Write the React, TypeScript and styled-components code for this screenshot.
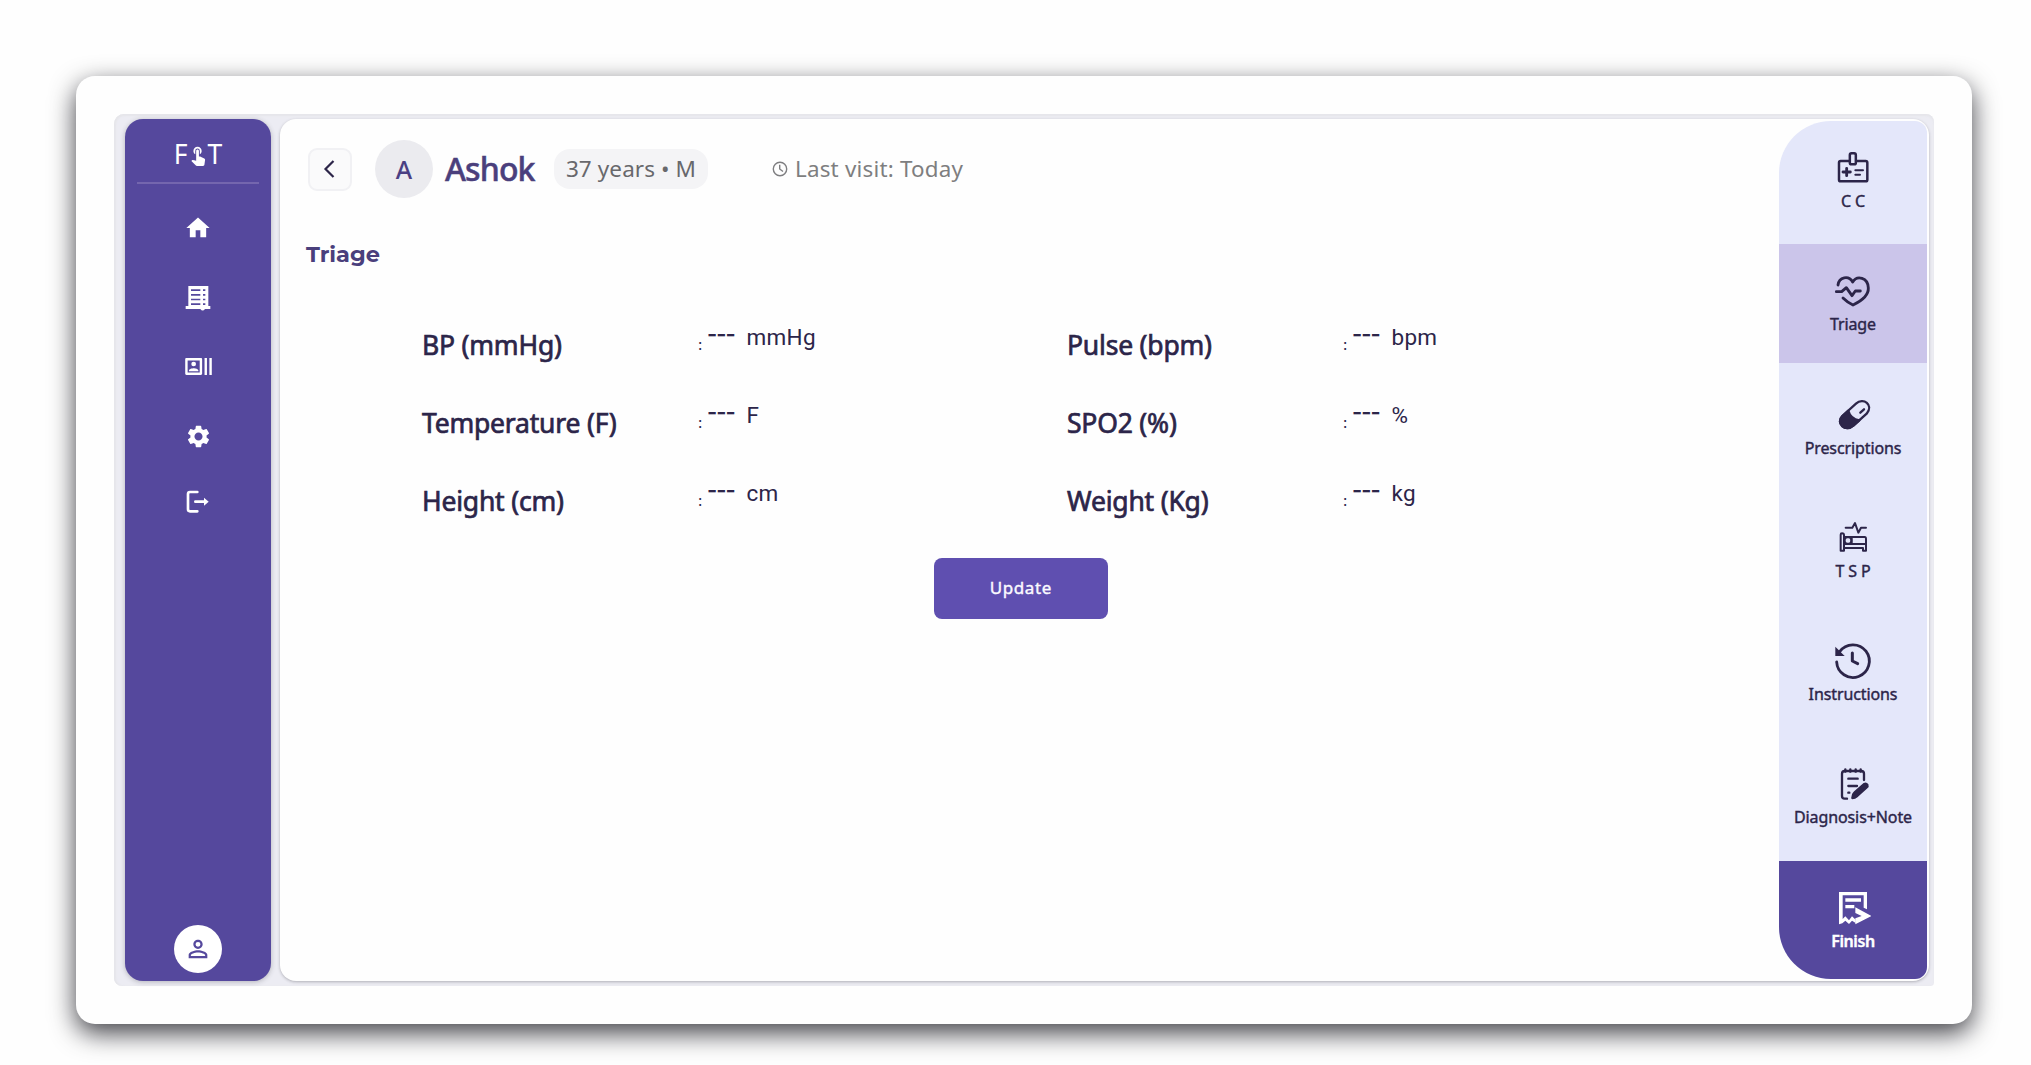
import React from "react";
import styled, { createGlobalStyle } from "styled-components";
import { MdHome, MdOutlineRecentActors, MdSettings, MdPersonOutline, MdTouchApp } from "react-icons/md";

const INK = "#2c2549";
const PURPLE = "#55489d";
const NOTO = `"Noto Sans", "Open Sans", sans-serif`;

const GlobalStyle = createGlobalStyle`
  *, *::before, *::after { box-sizing: border-box; }
  html, body { margin: 0; padding: 0; background: #fefefe; }
  body { font-family: ${NOTO}; color: ${INK}; }
  svg { display: block; flex: none; }
`;

const Page = styled.div`
  width: 2031px;
  height: 1065px;
  padding: 76px 59px 41px 76px;
  overflow: hidden;
`;

const Frame = styled.div`
  height: 948px;
  padding: 38px;
  border-radius: 19px;
  background: #fefefe;
  box-shadow: 0 9px 26px rgba(4, 4, 12, 0.76);
`;

const Shell = styled.div`
  display: flex;
  gap: 9px;
  height: 872px;
  padding: 5px 5px 5px 11px;
  border-radius: 10px 8px 4px 8px;
  background: #ececf3;
  box-shadow: inset 0 2px 2px #e6e6ea, inset 2px 0 2px #e6e6ea;
`;

const Sidebar = styled.aside`
  display: flex;
  flex-direction: column;
  align-items: center;
  width: 146px;
  border-radius: 18px;
  background: ${PURPLE};
  color: #fff;
  box-shadow: 0 1px 5px rgba(50, 50, 60, 0.3);
`;

const Logo = styled.div`
  display: flex;
  align-items: center;
  justify-content: center;
  width: 122px;
  height: 65px;
  padding-top: 8px;
  border-bottom: 2px solid #7466ae;
  font-size: 26.5px;
  font-weight: 400;
  line-height: 1;
`;

const Touch = styled(MdTouchApp)`
  margin: 0 -1px;
`;

const SideNav = styled.nav`
  display: flex;
  flex-direction: column;
  align-items: center;
  padding-top: 29px;
`;

const SideLink = styled.a<{ $height: number }>`
  display: flex;
  align-items: center;
  justify-content: center;
  height: ${(p) => p.$height}px;
`;

const Profile = styled.div`
  display: flex;
  align-items: center;
  justify-content: center;
  width: 48px;
  height: 48px;
  margin: auto 0 8px;
  border-radius: 50%;
  background: #fff;
  color: ${PURPLE};
`;

const Main = styled.main`
  display: flex;
  flex: 1;
  justify-content: space-between;
  padding: 2px;
  border-radius: 16px;
  background: #fefefe;
  box-shadow: 0 1px 3px rgba(50, 50, 60, 0.32);
`;

const Content = styled.section`
  display: flex;
  flex-direction: column;
  width: 1497px;
  padding: 19px 0 0 24px;
`;

const Header = styled.header`
  display: flex;
  align-items: center;
  height: 58px;
`;

const BackButton = styled.button`
  display: flex;
  align-items: center;
  justify-content: center;
  width: 44px;
  height: 43px;
  margin: 0 0 0 2px;
  padding: 0 2px 0 0;
  border: 2px solid #f1f1f4;
  border-radius: 9px;
  background: #fafafb;
`;

const Initial = styled.div`
  display: flex;
  align-items: center;
  justify-content: center;
  width: 58px;
  height: 58px;
  margin-left: 23px;
  padding-bottom: 1px;
  border-radius: 50%;
  background: #ebebef;
  color: #4a3f83;
  font-size: 25px;
  font-weight: 500;
`;

const Name = styled.h1`
  width: 109px;
  margin: 0 0 0 12px;
  color: #4a3f7c;
  font-size: 32px;
  font-weight: 500;
  line-height: 44px;
  letter-spacing: -0.9px;
  -webkit-text-stroke: 0.5px #4a3f7c;
`;

const Badge = styled.span`
  display: flex;
  align-items: center;
  justify-content: center;
  width: 154px;
  height: 40px;
  padding-bottom: 1px;
  border-radius: 16px;
  background: #f4f4f6;
  color: #68686c;
  font-size: 22.5px;
  letter-spacing: 0.1px;
  white-space: nowrap;
`;

const Visit = styled.span`
  display: flex;
  align-items: center;
  gap: 7px;
  margin: 0 0 1px 64px;
  color: #7e7e80;
  font-size: 22.4px;
  letter-spacing: 0.2px;
  white-space: nowrap;
`;

const Title = styled.h2`
  margin: 42px 0 0 0;
  color: #4a3f7c;
  font-family: Montserrat, Inter, sans-serif;
  font-size: 22.5px;
  font-weight: 700;
  line-height: 28px;
  letter-spacing: 0;
`;

const Vitals = styled.dl`
  display: grid;
  grid-template-columns: 645px 645px;
  grid-auto-rows: 78px;
  margin: 38px 0 0 116px;
`;

const Vital = styled.div`
  display: grid;
  grid-template-columns: 276px 9px 39.5px auto;
  align-items: baseline;
  justify-content: start;
`;

const VitalLabel = styled.dt`
  font-size: 26.5px;
  font-weight: 400;
  line-height: 78px;
  letter-spacing: -0.2px;
  white-space: nowrap;
  -webkit-text-stroke: 0.7px ${INK};
`;

const Colon = styled.span`
  position: relative;
  top: -5px;
  font-family: Inter, sans-serif;
  font-size: 15px;
`;

const Dashes = styled.dd`
  position: relative;
  top: -13px;
  margin: 0;
  font-family: Inter, sans-serif;
  font-size: 22px;
  font-weight: 600;
  letter-spacing: -1px;
`;

const Unit = styled.span`
  position: relative;
  top: -10px;
  font-family: Roboto, sans-serif;
  font-size: 22.5px;
  letter-spacing: 0.3px;
`;

const UpdateButton = styled.button`
  align-self: flex-start;
  width: 173.5px;
  height: 61px;
  margin: 18px 0 0 628px;
  padding: 0 0 2px;
  border: 0;
  border-radius: 8px;
  background: #5f4fb0;
  color: #fbfaff;
  font-family: ${NOTO};
  font-size: 17px;
  font-weight: 400;
  letter-spacing: 0.6px;
  -webkit-text-stroke: 0.4px #fbfaff;
`;

const StepRail = styled.nav`
  display: flex;
  flex-direction: column;
  gap: 5.1px;
  width: 148px;
  height: 858px;
  overflow: hidden;
  border-radius: 52px 12px 12px 52px;
  background: #e4e7fa;
`;

const Step = styled.a<{ $tone?: "active" | "finish" }>`
  display: flex;
  flex: 1;
  flex-direction: column;
  align-items: center;
  gap: 1px;
  padding-top: 30px;
  background: ${(p) => (p.$tone === "active" ? "#cbc5ea" : p.$tone === "finish" ? PURPLE : "transparent")};
  color: ${(p) => (p.$tone === "finish" ? "#fff" : INK)};
`;

const StepLabel = styled.span<{ $strong?: boolean }>`
  font-size: 16px;
  font-weight: ${(p) => (p.$strong ? 600 : 400)};
  line-height: 26px;
  letter-spacing: ${(p) => (p.$strong ? "-0.4px" : "-0.1px")};
  white-space: pre;
  -webkit-text-stroke: 0.4px currentColor;
`;

/* Step icons share a 36px box drawn on a 108-unit grid. */
const Glyph = ({ children, width = 7.5 }: { children: React.ReactNode; width?: number }) => (
  <svg width="36" height="36" viewBox="0 0 108 108" overflow="visible" fill="none" stroke="currentColor" strokeWidth={width} strokeLinecap="round" strokeLinejoin="round">
    {children}
  </svg>
);

const ReceiptIcon = () => (
  <svg width="26" height="26" viewBox="0 0 78 78" fill="currentColor">
    <path fillRule="evenodd" d="M10 3h60v60h6v9H60q-7 9-14 0H2v-9h8zM18 13v5h28v-5zm36 0v5h7v-5zM18 27v5h28v-5zm36 0v5h7v-5zM18 41v5h28v-5zm36 0v5h7v-5zM18 55v5h28v-5zm36 0v5h7v-5z" />
  </svg>
);

const LogoutIcon = () => (
  <svg width="24" height="24" viewBox="0 0 72 72" fill="none" stroke="currentColor" strokeWidth="8" strokeLinecap="round" strokeLinejoin="round">
    <path d="M34 6H12Q6 6 6 12V58Q6 64 12 64H34M28 35H56" />
    <path d="M54 23l14 12-14 12z" fill="currentColor" stroke="none" />
  </svg>
);

const BadgeIcon = () => (
  <Glyph>
    <path d="M41 30H17Q12 30 12 35V86Q12 91 17 91H92Q97 91 97 86V35Q97 30 92 30H66" />
    <rect x="44.5" y="7" width="18" height="33" rx="5" />
    <path d="M35 52V74M24 63H46" strokeWidth="8.5" />
    <path d="M61 58H84M61 71H75" strokeWidth="6" />
  </Glyph>
);

const HeartIcon = () => (
  <Glyph width={8.5}>
    <path d="M9 33C12 9 41 3 53 24C66 3 99 10 100 42C101 64 79 81 54 93Q37 85 24 72" />
    <path d="M4 53H20L34 41L51 65L61 51H76" />
  </Glyph>
);

const PillIcon = () => (
  <Glyph width={7}>
    <path d="M22 54L63 17C85 -3 117 20 95 47L55 83C31 104 1 75 22 54Z" />
    <path d="M22 54L40 38Q46 62 73 67L55 83C31 104 1 75 22 54Z" fill="currentColor" />
    <path d="M76 44L87 34" />
  </Glyph>
);

const BedIcon = () => (
  <Glyph width={6}>
    <path d="M32 20H52L60 6L70 35L78 20H93" />
    <path d="M17 89V41Q17 37 21 37Q27 37 27 43V69H93V89H84V81H27V89H17ZM27 48H89Q93 48 93 54V69" />
    <path d="M50 49V68" />
    <rect x="29" y="49" width="20" height="19" rx="8" />
    <path d="M27 69V81" />
  </Glyph>
);

const HistoryIcon = () => (
  <Glyph width={8.5}>
    <path d="M5 54A49 49 0 1 0 14 23" />
    <path d="M1 8L1 36L29 36Z" fill="currentColor" stroke="none" />
    <path d="M52 27V51L68 59" strokeWidth="9" />
  </Glyph>
);

const NoteIcon = () => (
  <Glyph width={7}>
    <path d="M36 95H29Q21 95 21 87V20Q21 12 29 12H79Q87 12 87 20V39" />
    <path d="M31 7V14M46 7V14M62 7V14M77 7V14" />
    <path d="M40 35H68M40 57H66M40 77H43" />
    <path d="M52 93Q53 81 58 77L88 51Q93 48 97 53Q99 58 95 61L65 88Q60 93 52 93Z" fill="currentColor" />
  </Glyph>
);

const FinishIcon = () => (
  <svg width="36" height="36" viewBox="0 0 108 108" fill="currentColor">
    <path d="M12 3H96V55L86 50V13H23V84L31 76L42 88L51 76L62 86V96L51 89L42 99L31 89L22 97L12 100Z" />
    <path d="M31 22H78V32H31ZM31 42H58V52H31Z" />
    <path d="M61 49L109 75L61 100V82L80 75L61 66Z" />
  </svg>
);

const vitals = [
  ["BP (mmHg)", "mmHg"],
  ["Pulse (bpm)", "bpm"],
  ["Temperature (F)", "F"],
  ["SPO2 (%)", "%"],
  ["Height (cm)", "cm"],
  ["Weight (Kg)", "kg"],
];

const steps: { label: string; icon: React.ReactNode; tone?: "active" | "finish" }[] = [
  { label: "C C", icon: <BadgeIcon /> },
  { label: "Triage", icon: <HeartIcon />, tone: "active" },
  { label: "Prescriptions", icon: <PillIcon /> },
  { label: "T S P", icon: <BedIcon /> },
  { label: "Instructions", icon: <HistoryIcon /> },
  { label: "Diagnosis+Note", icon: <NoteIcon /> },
  { label: "Finish", icon: <FinishIcon />, tone: "finish" },
];

export default function App() {
  return (
    <Page>
      <GlobalStyle />
      <Frame>
        <Shell>
          <Sidebar>
            <Logo>
              <span>F</span>
              <Touch size={22} />
              <span>T</span>
            </Logo>
            <SideNav>
              <SideLink $height={29}><MdHome size={28} /></SideLink>
              <SideLink $height={112}><ReceiptIcon /></SideLink>
              <SideLink $height={25}><MdOutlineRecentActors size={29} /></SideLink>
              <SideLink $height={114}><MdSettings size={27} /></SideLink>
              <SideLink $height={17}><LogoutIcon /></SideLink>
            </SideNav>
            <Profile><MdPersonOutline size={28} /></Profile>
          </Sidebar>
          <Main>
            <Content>
              <Header>
                <BackButton aria-label="Back">
                  <svg width="12" height="18" viewBox="0 0 12 18" fill="none" stroke={INK} strokeWidth="2.2">
                    <path d="M10.5 1L2.5 9L10.5 17" />
                  </svg>
                </BackButton>
                <Initial>A</Initial>
                <Name>Ashok</Name>
                <Badge>37 years • M</Badge>
                <Visit>
                  <svg width="16" height="16" viewBox="0 0 16 16" fill="none" stroke="currentColor" strokeWidth="1.4">
                    <circle cx="8" cy="8" r="6.7" />
                    <path d="M7.7 3.8V8L11 10.5" />
                  </svg>
                  <span>Last visit: Today</span>
                </Visit>
              </Header>
              <Title>Triage</Title>
              <Vitals>
                {vitals.map(([label, unit]) => (
                  <Vital key={label}>
                    <VitalLabel>{label}</VitalLabel>
                    <Colon>:</Colon>
                    <Dashes>---</Dashes>
                    <Unit>{unit}</Unit>
                  </Vital>
                ))}
              </Vitals>
              <UpdateButton>Update</UpdateButton>
            </Content>
            <StepRail>
              {steps.map((s) => (
                <Step key={s.label} $tone={s.tone}>
                  {s.icon}
                  <StepLabel $strong={s.tone === "finish"}>{s.label}</StepLabel>
                </Step>
              ))}
            </StepRail>
          </Main>
        </Shell>
      </Frame>
    </Page>
  );
}
